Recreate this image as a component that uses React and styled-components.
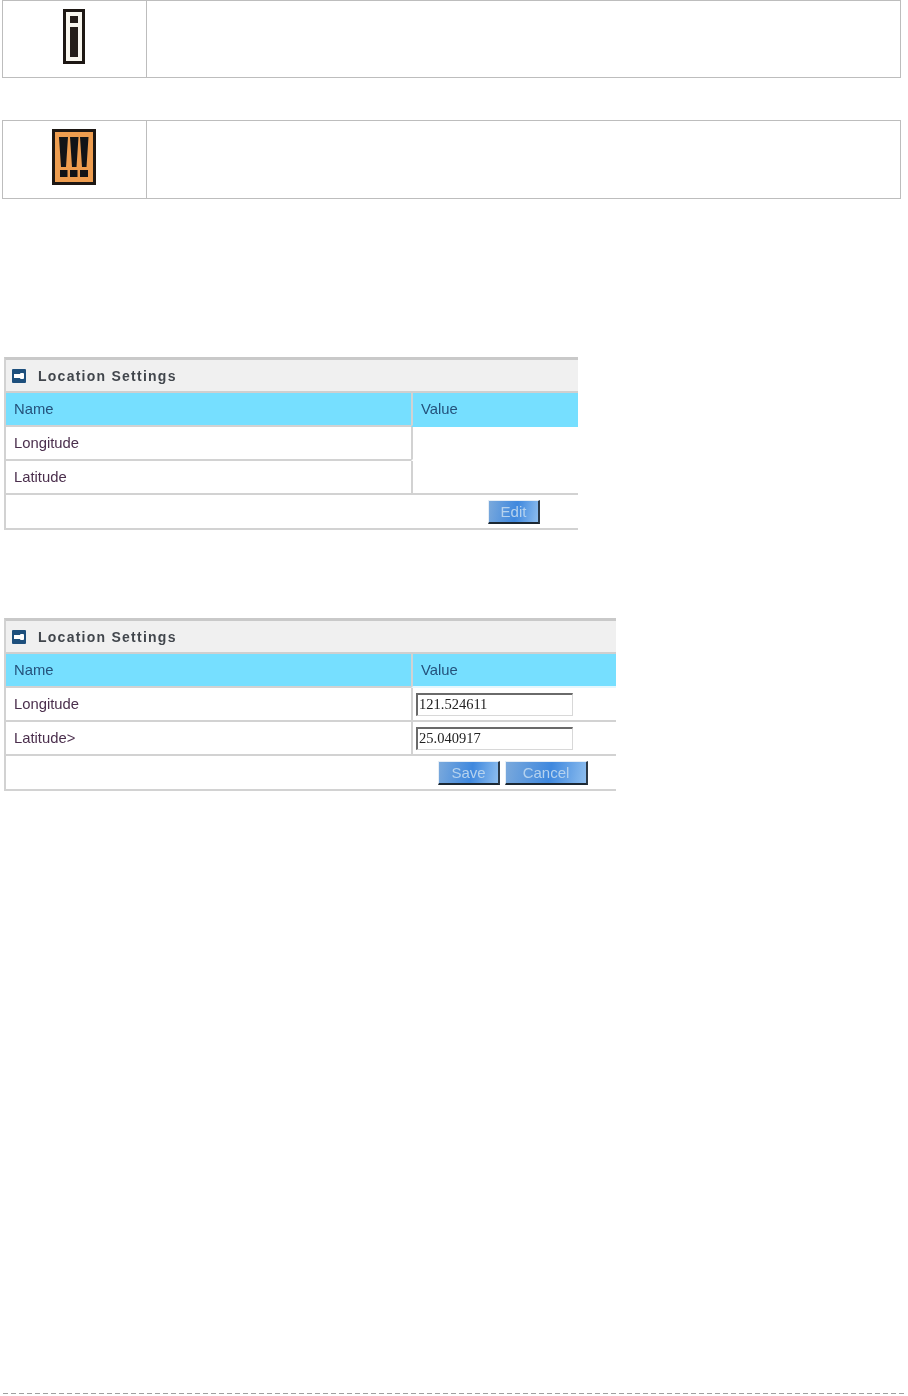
import React from "react";
import styled, { createGlobalStyle } from "styled-components";

const GlobalStyle = createGlobalStyle`
  html, body {
    margin: 0;
    padding: 0;
    background: #fff;
  }
`;

const Page = styled.div`
  width: 908px;
  height: 1396px;
  box-sizing: border-box;
  display: flex;
  flex-direction: column;
  overflow: hidden;
  font-family: "Liberation Sans", Arial, sans-serif;
`;

const Note = styled.div`
  display: grid;
  grid-template-columns: 144px 1fr;
  width: 899px;
  height: ${({ $height }) => $height}px;
  box-sizing: border-box;
  margin: ${({ $top }) => $top}px 0 0 2px;
  border: 1px solid #bdbdbd;
`;

const NoteIcon = styled.div`
  display: flex;
  align-items: center;
  justify-content: center;
  box-sizing: border-box;
  padding: 0 ${({ $shiftLeft }) => $shiftLeft}px ${({ $lift }) => $lift}px 0;
  border-right: 1px solid #bdbdbd;
`;

const Panel = styled.div`
  width: ${({ $width }) => $width}px;
  margin: ${({ $top }) => $top}px 0 0 4px;
  border-top: 3px solid #c9c9c9;
  border-left: 2px solid #d2d2d2;
  border-bottom: 2px solid #d2d2d2;
  box-sizing: border-box;
  filter: blur(0.3px);
`;

const TitleBar = styled.div`
  display: flex;
  align-items: center;
  gap: 12px;
  height: 33px;
  padding: 1px 0 0 6px;
  box-sizing: border-box;
  background: #f0f0f0;
  border-bottom: 2px solid #cfcfcf;
`;

const Title = styled.span`
  font-size: 14px;
  font-weight: 700;
  letter-spacing: 1.25px;
  color: #33383f;
  opacity: 0.92;
`;

const Row = styled.div`
  display: grid;
  grid-template-columns: 405px 1fr;
  height: 34px;
  background: ${({ $head }) => ($head ? "#76dfff" : "#fff")};
`;

const Cell = styled.div`
  display: flex;
  align-items: center;
  box-sizing: border-box;
  padding-left: 8px;
  font-size: 14.8px;
  color: ${({ $head }) => ($head ? "#24527c" : "#4b2f4d")};
  border-bottom: 2px solid ${({ $rule }) => $rule || "#d2d2d2"};
`;

const ValueCell = styled(Cell)`
  border-left: 2px solid #d2d2d2;
`;

const ValueInput = styled.input`
  width: 157px;
  height: 23px;
  box-sizing: border-box;
  margin: 1px 0 0 -5px;
  padding: 0 0 2px 1px;
  font-family: "Liberation Serif", "Times New Roman", serif;
  font-size: 14.5px;
  color: #222;
  background: #fff;
  border-style: solid;
  border-width: 2px 1px 1px 2px;
  border-color: #6a6a6a #d8d8d8 #d8d8d8 #6a6a6a;
  outline: none;
`;

const Footer = styled.div`
  display: flex;
  justify-content: flex-end;
  align-items: center;
  gap: 5px;
  height: 33px;
  padding-right: ${({ $right }) => $right}px;
  box-sizing: border-box;
  background: #fff;
`;

const ActionButton = styled.button`
  width: ${({ $width }) => $width}px;
  height: 24px;
  padding: 1px 0 0;
  font-family: "Liberation Sans", Arial, sans-serif;
  font-size: 15px;
  color: #b5d2ee;
  background: linear-gradient(100deg, #7aa9dc 0%, #3f88de 55%, #8dbdee 100%);
  border-style: solid;
  border-width: 1px 2px 2px 1px;
  border-color: #e6eef6 #2c3a48 #1c2833 #e6eef6;
`;

const Dashes = styled.div`
  height: 1px;
  margin: auto 3px 2px 3px;
  background: repeating-linear-gradient(90deg, #a0a0a0 0 5px, transparent 5px 8px);
`;

function InfoIcon() {
  return (
    <svg width="22" height="55" viewBox="0 0 22 55">
      <rect x="1.5" y="1.5" width="19" height="52" fill="#f8f6ee" stroke="#1d1713" strokeWidth="3" />
      <rect x="7" y="7" width="8" height="7" fill="#241d18" />
      <rect x="7" y="18" width="8" height="30" fill="#241d18" />
    </svg>
  );
}

function WarningIcon() {
  return (
    <svg width="44" height="56" viewBox="0 0 44 56">
      <rect x="1.5" y="1.5" width="41" height="53" fill="#ee9d4f" stroke="#1d1713" strokeWidth="3" />
      <path d="M7 8h9l-2 30h-5zM18 8h8.5l-2 30h-4.5zM28 8h8.5l-2 30h-4.5z" fill="#121417" />
      <path d="M8 41h7.5v7H8zM18 41h7.5v7H18zM28 41h8v7h-8z" fill="#121417" />
    </svg>
  );
}

function PanelIcon() {
  return (
    <svg width="14" height="14" viewBox="0 0 14 14">
      <rect width="14" height="14" rx="1" fill="#1d4f7c" />
      <rect x="2" y="5" width="7" height="4" fill="#fff" />
      <rect x="8" y="4" width="4" height="6" rx="1" fill="#fff" />
    </svg>
  );
}

function LocationPanel({ width, top, latitudeLabel, editing, footerRight }) {
  return (
    <Panel $width={width} $top={top}>
      <TitleBar>
        <PanelIcon />
        <Title>Location Settings</Title>
      </TitleBar>
      <Row $head>
        <Cell $head>Name</Cell>
        <ValueCell $head $rule={editing ? "#e4f7fd" : "#76dfff"}>Value</ValueCell>
      </Row>
      <Row>
        <Cell>Longitude</Cell>
        <ValueCell $rule={editing ? undefined : "#fff"}>
          {editing && <ValueInput readOnly value="121.524611" />}
        </ValueCell>
      </Row>
      <Row>
        <Cell>{latitudeLabel}</Cell>
        <ValueCell>{editing && <ValueInput readOnly value="25.040917" />}</ValueCell>
      </Row>
      <Footer $right={footerRight}>
        {editing ? (
          <>
            <ActionButton $width={62}>Save</ActionButton>
            <ActionButton $width={83}>Cancel</ActionButton>
          </>
        ) : (
          <ActionButton $width={52}>Edit</ActionButton>
        )}
      </Footer>
    </Panel>
  );
}

export default function App() {
  return (
    <Page>
      <GlobalStyle />
      <Note $top={0} $height={78}>
        <NoteIcon $lift={5} $shiftLeft={2}><InfoIcon /></NoteIcon>
        <div />
      </Note>
      <Note $top={42} $height={79}>
        <NoteIcon $lift={5} $shiftLeft={2}><WarningIcon /></NoteIcon>
        <div />
      </Note>
      <LocationPanel width={574} top={158} latitudeLabel="Latitude" footerRight={38} />
      <LocationPanel width={612} top={88} latitudeLabel="Latitude>" editing footerRight={28} />
      <Dashes />
    </Page>
  );
}
